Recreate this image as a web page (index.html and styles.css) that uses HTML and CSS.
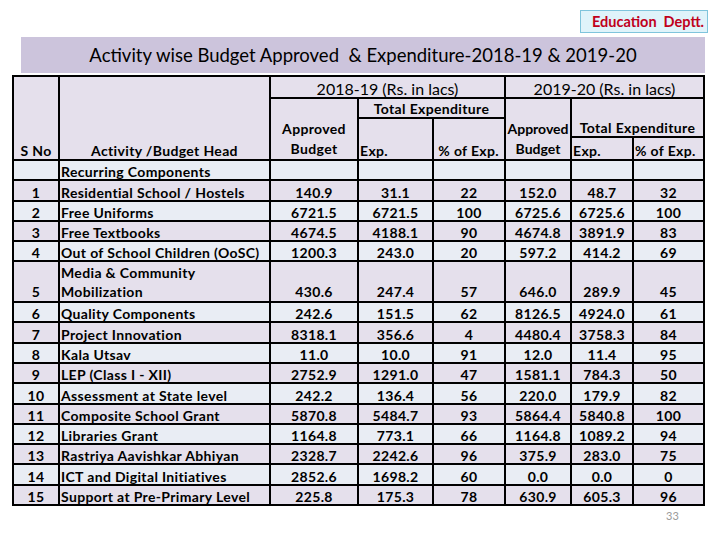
FILE: index.html
```html
<!DOCTYPE html>
<html>
<head>
<meta charset="utf-8">
<link rel="stylesheet" href="styles.css">
</head>
<body>
<div class="page">
  <div class="badge-row"><div class="badge">Education&nbsp; Deptt.</div></div>
  <div class="title">Activity wise Budget Approved&nbsp; &amp; Expenditure-2018-19 &amp; 2019-20</div>
  <table class="grid">
    <colgroup>
      <col class="c-sno"><col class="c-act"><col class="c-ab1"><col class="c-ex1"><col class="c-pc1"><col class="c-ab2"><col class="c-ex2"><col class="c-pc2">
    </colgroup>
    <thead>
      <tr class="h1">
        <th rowspan="4" class="b">S No</th>
        <th rowspan="4" class="b">Activity /Budget Head</th>
        <th colspan="3" class="yr">2018-19 (Rs. in lacs)</th>
        <th colspan="3" class="yr">2019-20 (Rs. in lacs)</th>
      </tr>
      <tr class="h2">
        <th rowspan="3" class="b wrap">Approved Budget</th>
        <th colspan="2" class="b">Total Expenditure</th>
        <th rowspan="3" class="b wrap tight">Approved Budget</th>
        <th colspan="2" rowspan="2" class="b">Total Expenditure</th>
      </tr>
      <tr class="h3">
        <th rowspan="2" class="b left">Exp.</th>
        <th rowspan="2" class="b right">% of Exp.</th>
      </tr>
      <tr class="h4">
        <th class="b left">Exp.</th>
        <th class="b right r2">% of Exp.</th>
      </tr>
    </thead>
    <tbody>
      <tr class="even"><td></td><td class="act">Recurring Components</td><td></td><td></td><td></td><td></td><td></td><td></td></tr>
      <tr class="odd"><td>1</td><td class="act">Residential School / Hostels</td><td>140.9</td><td>31.1</td><td>22</td><td>152.0</td><td>48.7</td><td>32</td></tr>
      <tr class="even"><td>2</td><td class="act">Free Uniforms</td><td>6721.5</td><td>6721.5</td><td>100</td><td>6725.6</td><td>6725.6</td><td>100</td></tr>
      <tr class="odd"><td>3</td><td class="act">Free Textbooks</td><td>4674.5</td><td>4188.1</td><td>90</td><td>4674.8</td><td>3891.9</td><td>83</td></tr>
      <tr class="even"><td>4</td><td class="act">Out of School Children (OoSC)</td><td>1200.3</td><td>243.0</td><td>20</td><td>597.2</td><td>414.2</td><td>69</td></tr>
      <tr class="odd tall"><td>5</td><td class="act">Media &amp; Community<br>Mobilization</td><td>430.6</td><td>247.4</td><td>57</td><td>646.0</td><td>289.9</td><td>45</td></tr>
      <tr class="even"><td>6</td><td class="act">Quality Components</td><td>242.6</td><td>151.5</td><td>62</td><td>8126.5</td><td>4924.0</td><td>61</td></tr>
      <tr class="odd"><td>7</td><td class="act">Project Innovation</td><td>8318.1</td><td>356.6</td><td>4</td><td>4480.4</td><td>3758.3</td><td>84</td></tr>
      <tr class="even"><td>8</td><td class="act">Kala Utsav</td><td>11.0</td><td>10.0</td><td>91</td><td>12.0</td><td>11.4</td><td>95</td></tr>
      <tr class="odd"><td>9</td><td class="act">LEP (Class I - XII)</td><td>2752.9</td><td>1291.0</td><td>47</td><td>1581.1</td><td>784.3</td><td>50</td></tr>
      <tr class="even"><td>10</td><td class="act">Assessment at State level</td><td>242.2</td><td>136.4</td><td>56</td><td>220.0</td><td>179.9</td><td>82</td></tr>
      <tr class="odd"><td>11</td><td class="act">Composite School Grant</td><td>5870.8</td><td>5484.7</td><td>93</td><td>5864.4</td><td>5840.8</td><td>100</td></tr>
      <tr class="even"><td>12</td><td class="act">Libraries Grant</td><td>1164.8</td><td>773.1</td><td>66</td><td>1164.8</td><td>1089.2</td><td>94</td></tr>
      <tr class="odd"><td>13</td><td class="act">Rastriya Aavishkar Abhiyan</td><td>2328.7</td><td>2242.6</td><td>96</td><td>375.9</td><td>283.0</td><td>75</td></tr>
      <tr class="even"><td>14</td><td class="act">ICT and Digital Initiatives</td><td>2852.6</td><td>1698.2</td><td>60</td><td>0.0</td><td>0.0</td><td>0</td></tr>
      <tr class="odd"><td>15</td><td class="act">Support at Pre-Primary Level</td><td>225.8</td><td>175.3</td><td>78</td><td>630.9</td><td>605.3</td><td>96</td></tr>
    </tbody>
  </table>
  <div class="pageno">33</div>
</div>
</body>
</html>
```
FILE: styles.css
```css
html, body {
  margin: 0;
  padding: 0;
  background: #ffffff;
}
body {
  font-family: "Lato", "Open Sans", sans-serif;
  color: #000;
}
.page {
  width: 720px;
  height: 540px;
  overflow: hidden;
}
.badge-row {
  display: flex;
  justify-content: flex-end;
  padding-top: 10px;
  padding-right: 12px;
}
.badge {
  width: 128px;
  height: 23px;
  box-sizing: border-box;
  border: 1px solid #7fc4dc;
  background: #dff3fa;
  color: #c0001c;
  font-weight: bold;
  font-size: 14.5px;
  line-height: 21px;
  padding-left: 11px;
  white-space: nowrap;
}
.title {
  margin: 4px 0 0 21px;
  width: 684px;
  height: 36px;
  background: #ccc4dc;
  font-size: 18.5px;
  line-height: 36px;
  text-align: center;
  white-space: nowrap;
}
.grid {
  margin: 2px 0 0 12px;
  border-collapse: collapse;
  table-layout: fixed;
  width: 691px;
  font-size: 14px;
  letter-spacing: 0.35px;
}
.c-sno { width: 46px; }
.c-act { width: 211px; }
.c-ab1 { width: 88px; }
.c-ex1 { width: 75px; }
.c-pc1 { width: 72px; }
.c-ab2 { width: 66px; }
.c-ex2 { width: 62px; }
.c-pc2 { width: 71px; }
.grid th, .grid td {
  border: 2px solid #000;
  padding: 0 1px;
  line-height: 15px;
  vertical-align: bottom;
  text-align: center;
  white-space: nowrap;
  overflow: hidden;
}
.grid th {
  background: #e5e0ec;
  font-weight: normal;
  padding-bottom: 1px;
}
.grid th.b { font-weight: bold; }
.grid th.yr { font-size: 16px; letter-spacing: 0; }
.grid th.wrap { white-space: normal; line-height: 20px; padding-bottom: 0; }
.grid th.tight { padding: 0; letter-spacing: 0; }
.grid th.left { text-align: left; }
.grid th.right { text-align: right; padding-right: 5px; }
.grid th.r2 { padding-right: 8px; }
.h1 { height: 22px; }
.h2 { height: 20px; }
.h3 { height: 19px; }
.h4 { height: 23px; }
.grid td {
  font-weight: bold;
  height: 18.3px;
  padding-bottom: 0;
}
.grid td.act { text-align: left; }
.grid tr.tall td { height: 38.6px; line-height: 19px; }
.grid tr.odd td { background: #e5e0ec; }
.grid tr.even td { background: #e9edf4; }
.pageno {
  margin: 3px 0 0 666px;
  font-size: 11px;
  color: #9a9a9a;
}
```
